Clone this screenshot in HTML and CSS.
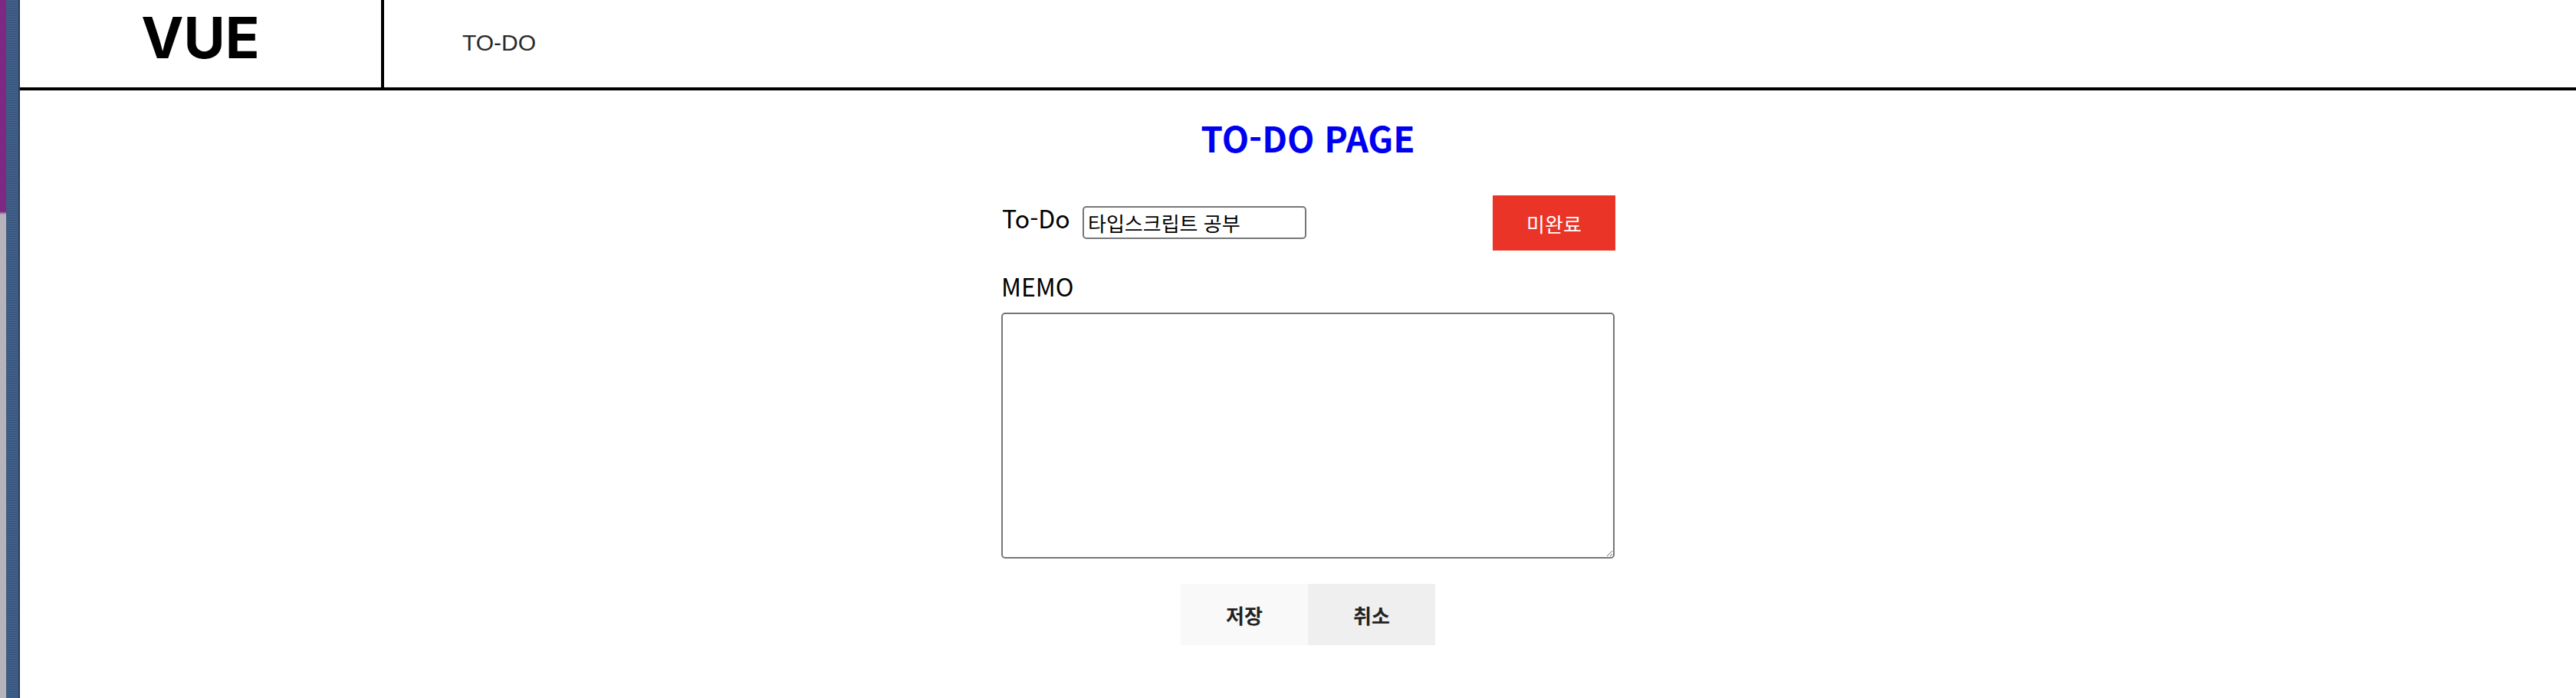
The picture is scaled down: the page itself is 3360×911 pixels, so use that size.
FILE: index.html
```html
<!DOCTYPE html>
<html lang="ko">
<head>
<meta charset="utf-8">
<title>TO-DO</title>
<link rel="stylesheet" href="styles.css">
</head>
<body>
<div class="strip">
  <div class="strip-edge"></div>
  <div class="strip-bar"></div>
</div>
<div class="page">
  <header class="header">
    <div class="logo">VUE</div>
    <nav class="nav"><a class="nav-link">TO-DO</a></nav>
  </header>
  <main class="main">
    <h2 class="title">TO-DO PAGE</h2>
    <form class="form">
      <div class="todo-row">
        <label class="label todo-label" for="todo">To-Do</label>
        <input class="todo-input" id="todo" type="text" value="타입스크립트 공부">
        <button type="button" class="status-btn">미완료</button>
      </div>
      <label class="label memo-label" for="memo">MEMO</label>
      <textarea class="memo" id="memo"></textarea>
      <div class="actions">
        <button type="button" class="act save">저장</button>
        <button type="button" class="act cancel">취소</button>
      </div>
    </form>
  </main>
</div>
</body>
</html>
```
FILE: styles.css
```css
html, body {
  margin: 0;
  padding: 0;
}
body {
  width: 3360px;
  height: 911px;
  overflow: hidden;
  display: flex;
  background: #ffffff;
  font-family: "Noto Sans CJK KR", "Noto Sans", sans-serif;
  color: #000;
}
.strip {
  flex: 0 0 26px;
  display: flex;
  height: 911px;
}
.strip-edge {
  width: 8px;
  background: linear-gradient(to bottom, #7e2884 0, #7e2884 276px, #b6b4ba 280px, #b6b4ba 100%);
}
.strip-bar {
  width: 18px;
  background:
    linear-gradient(to right, rgba(0,0,0,0) 0, rgba(0,0,0,0) 16px, #2c3e5c 16px, #2c3e5c 18px),
    repeating-linear-gradient(to bottom, #40608a 0, #40608a 2px, #36527a 2px, #36527a 3px);
}
.page {
  flex: 0 0 3360px;
  display: flex;
  flex-direction: column;
}
.header {
  display: flex;
  height: 114px;
  border-bottom: 4px solid #000;
}
.logo {
  flex: 0 0 475px;
  box-sizing: border-box;
  border-right: 4px solid #000;
  font-family: Inter, "Noto Sans CJK KR", sans-serif;
  font-size: 74px;
  font-weight: 700;
  line-height: normal;
  text-align: center;
  padding-top: 4px;
}
.nav {
  padding-left: 102px;
  padding-top: 38px;
}
.nav-link {
  font-family: "Liberation Sans", Arial, sans-serif;
  font-size: 30px;
  line-height: 1.2;
  color: #2a2a2a;
}
.main {
  display: flex;
  flex-direction: column;
  align-items: center;
}
.title {
  margin: 37px 0 0;
  font-size: 46px;
  line-height: 48px;
  font-weight: 700;
  color: #0000f0;
}
.form {
  width: 800px;
  display: flex;
  flex-direction: column;
  margin-top: 52px;
}
.todo-row {
  display: flex;
  align-items: center;
  height: 72px;
}
.label {
  font-size: 32px;
  line-height: 1.2;
}
.todo-label {
  margin-left: 1px;
  margin-bottom: 14px;
  width: 105px;
}
.todo-input {
  width: 292px;
  height: 43px;
  box-sizing: border-box;
  border: 2px solid #767676;
  border-radius: 5px;
  padding: 0 5px;
  font-family: "Noto Sans CJK KR", sans-serif;
  font-size: 26px;
  color: #000;
  margin-top: -1px;
}
.status-btn {
  margin-left: auto;
  width: 160px;
  height: 72px;
  border: none;
  border-radius: 0;
  background: #ea3428;
  color: #fff;
  font-family: "Noto Sans CJK KR", sans-serif;
  font-size: 26px;
  padding: 0;
  margin-right: -1px;
}
.memo-label {
  margin-top: 27px;
  height: 38px;
}
.memo {
  margin-top: 16px;
  width: 800px;
  height: 321px;
  box-sizing: border-box;
  border: 2px solid #767676;
  border-radius: 5px;
  resize: both;
  font-family: "Noto Sans CJK KR", sans-serif;
  font-size: 26px;
}
.actions {
  display: flex;
  justify-content: center;
  margin-top: 33px;
}
.act {
  width: 166px;
  height: 80px;
  border: none;
  border-radius: 0;
  padding: 0;
  font-family: "Noto Sans CJK KR", sans-serif;
  font-size: 26px;
  font-weight: 700;
  color: #222;
}
.save {
  background: #f9f9f9;
}
.cancel {
  background: #efefef;
}
```
